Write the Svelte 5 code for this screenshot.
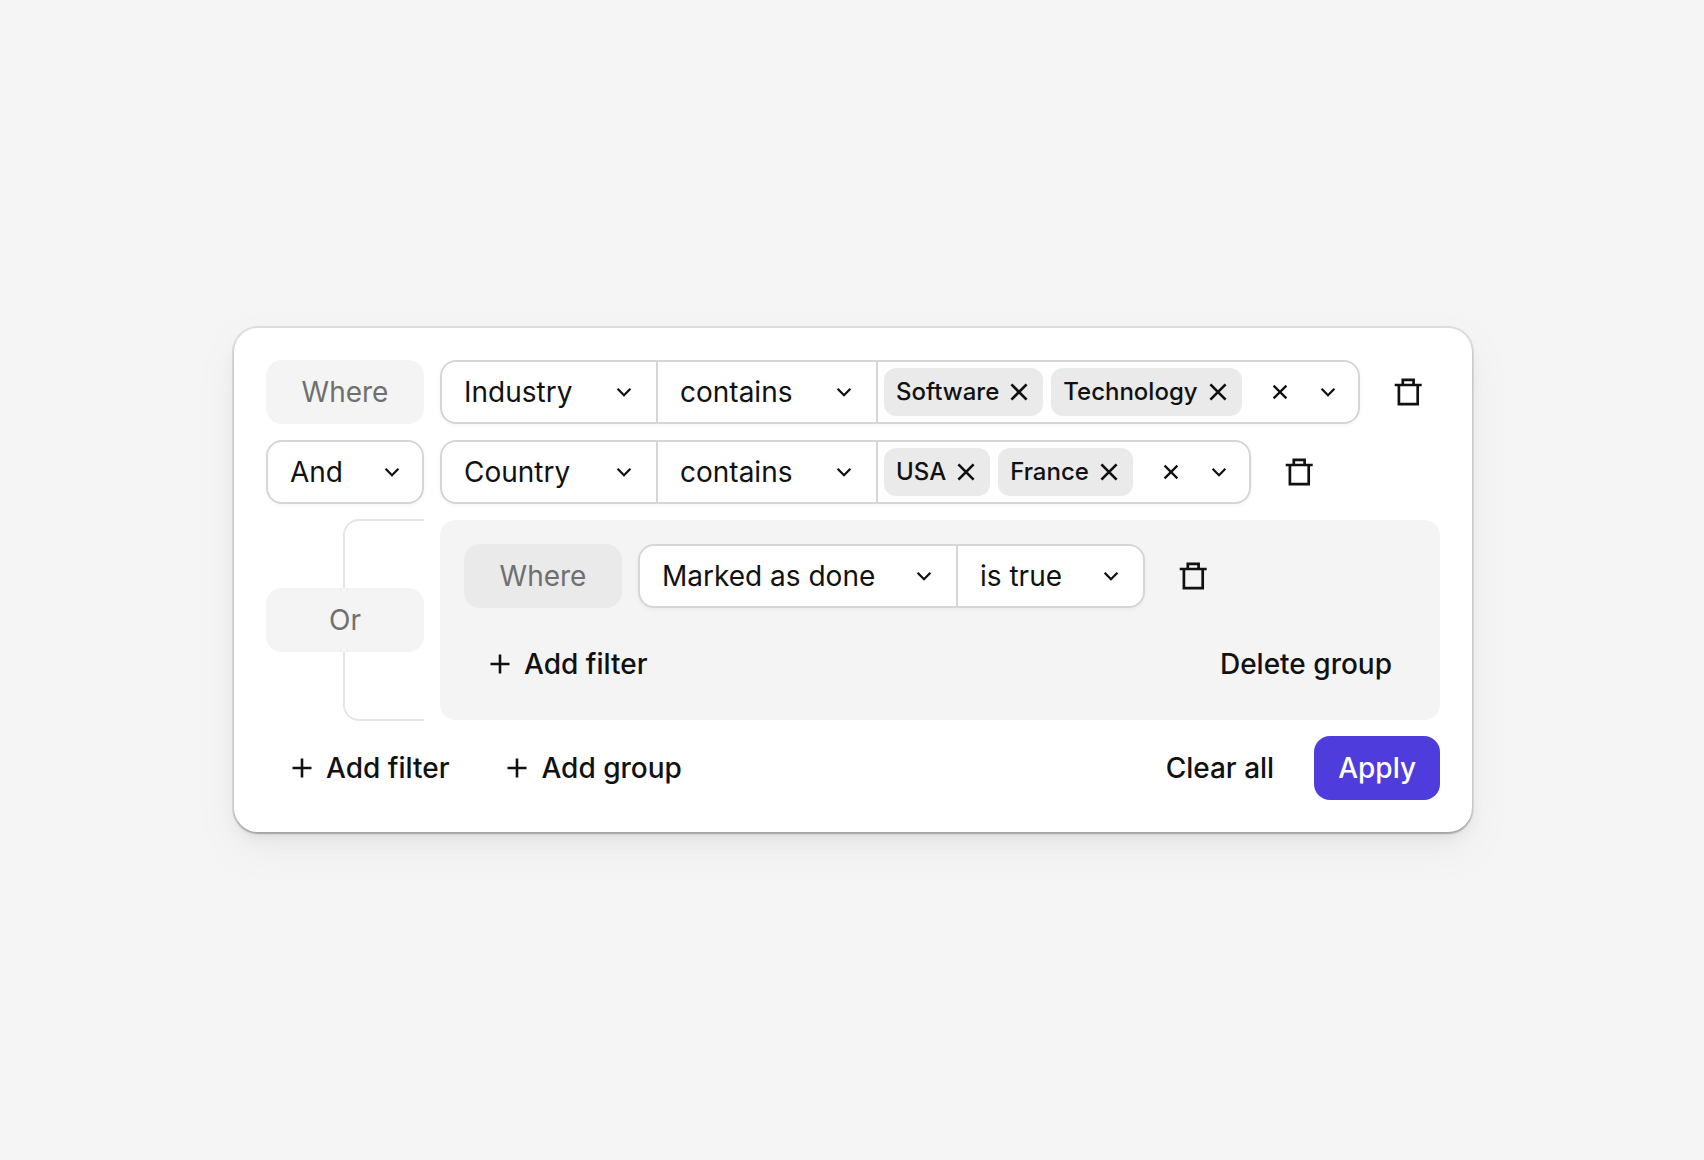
<script>
    let filters = $state([
        { id: 1, field: 'Industry', operator: 'contains', values: ['Software', 'Technology'] },
        { id: 2, field: 'Country', operator: 'contains', values: ['USA', 'France'] },
    ])
    let groupFilters = $state([{ id: 3, field: 'Marked as done', operator: 'is true' }])
    let connective = $state('And')
    let hasGroup = $state(true)
    let nextId = 4

    const fields = ['Industry', 'Country']
    const operators = ['contains', 'is', 'is not']

    function addFilter() {
        filters.push({ id: nextId++, field: 'Industry', operator: 'contains', values: [] })
    }

    function addGroupFilter() {
        groupFilters.push({ id: nextId++, field: 'Marked as done', operator: 'is true' })
    }

    function clearAll() {
        filters = []
        groupFilters = []
        hasGroup = false
    }
</script>

{#snippet chevron()}
    <svg class="chevron" viewBox="0 0 24 24" aria-hidden="true">
        <path d="M5.6 8.8 12 15.2l6.4-6.4" />
    </svg>
{/snippet}

{#snippet plus()}
    <svg class="plus" viewBox="0 0 24 24" aria-hidden="true">
        <path d="M12 2.5v19M2.5 12h19" />
    </svg>
{/snippet}

{#snippet trash()}
    <svg class="trash" viewBox="0 0 32 32" aria-hidden="true">
        <path d="M2.7 9h27M6.9 9v19.2h18.8V9M10.8 9V3.8h10.8V9" />
    </svg>
{/snippet}

<main>
    <form class="card" onsubmit={(e) => e.preventDefault()}>
        {#each filters as filter, i (filter.id)}
            <div class="row">
                {#if i === 0}
                    <div class="tag">Where</div>
                {:else}
                    <div class="control connective">
                        <label class="select">
                            <select aria-label="Connective" bind:value={connective}>
                                <option>And</option>
                                <option>Or</option>
                            </select>
                            {@render chevron()}
                        </label>
                    </div>
                {/if}
                <div class="control">
                    <label class="select field">
                        <select aria-label="Field" bind:value={filter.field}>
                            {#each fields as field}
                                <option>{field}</option>
                            {/each}
                        </select>
                        {@render chevron()}
                    </label>
                    <label class="select operator">
                        <select aria-label="Operator" bind:value={filter.operator}>
                            {#each operators as operator}
                                <option>{operator}</option>
                            {/each}
                        </select>
                        {@render chevron()}
                    </label>
                    <div class="values">
                        {#each filter.values as value, v}
                            <span class="chip">
                                {value}
                                <button type="button" aria-label="Remove {value}" onclick={() => filter.values.splice(v, 1)}>
                                    <svg viewBox="0 0 24 24" aria-hidden="true"><path d="M4.4 4.4l15.2 15.2M19.6 4.4L4.4 19.6" /></svg>
                                </button>
                            </span>
                        {/each}
                        <div class="value-actions">
                            <button type="button" aria-label="Clear values" onclick={() => (filter.values = [])}>
                                <svg viewBox="0 0 24 24" aria-hidden="true"><path d="M5.6 5.6l12.8 12.8M18.4 5.6L5.6 18.4" /></svg>
                            </button>
                            <button type="button" aria-label="Open values">
                                {@render chevron()}
                            </button>
                        </div>
                    </div>
                </div>
                <button type="button" class="delete" aria-label="Delete filter" onclick={() => filters.splice(i, 1)}>
                    {@render trash()}
                </button>
            </div>
        {/each}

        {#if hasGroup}
            <div class="row group-row">
                <div class="bracket">
                    <div class="tag">Or</div>
                </div>
                <div class="group">
                    {#each groupFilters as filter, i (filter.id)}
                        <div class="row">
                            <div class="tag dark">{i === 0 ? 'Where' : 'And'}</div>
                            <div class="control">
                                <label class="select">
                                    <select aria-label="Field" bind:value={filter.field}>
                                        <option>Marked as done</option>
                                    </select>
                                    {@render chevron()}
                                </label>
                                <label class="select">
                                    <select aria-label="Operator" bind:value={filter.operator}>
                                        <option>is true</option>
                                    </select>
                                    {@render chevron()}
                                </label>
                            </div>
                            <button type="button" class="delete" aria-label="Delete filter" onclick={() => groupFilters.splice(i, 1)}>
                                {@render trash()}
                            </button>
                        </div>
                    {/each}
                    <div class="actions">
                        <button type="button" class="button" onclick={addGroupFilter}>{@render plus()}Add filter</button>
                        <button type="button" class="button" onclick={() => (hasGroup = false)}>Delete group</button>
                    </div>
                </div>
            </div>
        {/if}

        <div class="actions">
            <div class="add">
                <button type="button" class="button" onclick={addFilter}>{@render plus()}Add filter</button>
                <button type="button" class="button" onclick={() => (hasGroup = true)}>{@render plus()}Add group</button>
            </div>
            <div class="finish">
                <button type="button" class="button" onclick={clearAll}>Clear all</button>
                <button type="submit" class="button primary">Apply</button>
            </div>
        </div>
    </form>
</main>

<style>
    :global(body) {
        margin: 0;
        background: #f5f5f5;
    }

    main {
        display: flex;
        align-items: center;
        justify-content: center;
        min-height: 100vh;
        box-sizing: border-box;
        padding: 32px 32px 32px 34px;
        font-family: Inter, sans-serif;
        font-size: 28px;
        line-height: 40px;
        color: #111111;
    }

    .card {
        flex: 1;
        display: flex;
        flex-direction: column;
        gap: 16px;
        max-width: 1174px;
        padding: 32px;
        border-radius: 24px;
        background: #ffffff;
        box-shadow:
            0 0 0 2px rgba(0, 0, 0, .09),
            0 2px 2px 0 rgba(0, 0, 0, .2),
            0 8px 16px -4px rgba(0, 0, 0, .08),
            0 16px 48px 0 rgba(0, 0, 0, .05);
    }

    .row {
        display: flex;
        gap: 16px;
    }

    button,
    select {
        appearance: none;
        margin: 0;
        padding: 0;
        border: 0;
        background: none;
        font: inherit;
        color: inherit;
        cursor: pointer;
    }

    svg {
        display: block;
        width: 24px;
        height: 24px;
        fill: none;
        stroke: currentColor;
        stroke-width: 2.3;
    }

    svg.trash {
        width: 32px;
        height: 32px;
        stroke-width: 2.7;
    }

    svg.plus {
        stroke-width: 2.6;
    }

    .tag,
    .connective {
        flex: none;
        box-sizing: border-box;
        width: 158px;
        height: 64px;
    }

    .tag {
        display: flex;
        align-items: center;
        justify-content: center;
        border-radius: 16px;
        background: #f4f4f4;
        color: #6f6f6f;
    }

    .tag.dark {
        background: #eaeaea;
    }

    .control {
        display: flex;
        border: 2px solid #d6d6d6;
        border-radius: 16px;
        background: #ffffff;
        box-shadow: 0 2px 4px rgba(0, 0, 0, .04);
    }

    /* the chevron shares the select's cell */
    .select {
        display: grid;
        align-items: center;
        box-sizing: border-box;
    }

    .field {
        min-width: 214px;
    }

    .operator {
        min-width: 220px;
    }

    .connective .select {
        flex: 1;
    }

    .select + .select,
    .values {
        border-left: 2px solid #d6d6d6;
    }

    .select select {
        grid-area: 1 / 1;
        height: 60px;
        padding: 0 80px 0 22px;
        border-radius: 14px;
    }

    .connective select {
        padding-right: 0;
    }

    .select .chevron {
        grid-area: 1 / 1;
        justify-self: end;
        margin-right: 20px;
        pointer-events: none;
    }

    .connective .chevron {
        margin-right: 18px;
    }

    .values {
        display: flex;
        align-items: center;
        gap: 8px;
        padding-left: 6px;
    }

    .chip {
        display: flex;
        align-items: center;
        gap: 8px;
        height: 48px;
        padding: 0 12px;
        border-radius: 12px;
        background: #eaeaea;
        font-size: 24px;
        font-weight: 500;
    }

    .chip svg {
        stroke-width: 2.7;
    }

    .value-actions {
        display: flex;
        gap: 24px;
        padding: 0 18px;
    }

    .delete {
        display: flex;
        align-items: center;
        justify-content: center;
        width: 64px;
        height: 64px;
    }

    .group-row {
        align-items: stretch;
    }

    .bracket {
        position: relative;
        display: flex;
        align-items: center;
    }

    .bracket::before {
        content: '';
        position: absolute;
        top: -1px;
        right: 0;
        bottom: -1px;
        width: 79px;
        border: 2px solid #e5e5e5;
        border-right: 0;
        border-radius: 16px 0 0 16px;
    }

    .bracket .tag {
        position: relative;
    }

    .group {
        flex: 1;
        display: flex;
        flex-direction: column;
        gap: 24px;
        padding: 24px;
        border-radius: 16px;
        background: #f4f4f4;
    }

    .actions {
        display: flex;
        justify-content: space-between;
    }

    .add,
    .finish {
        display: flex;
        gap: 8px;
    }

    .finish {
        gap: 16px;
    }

    .button {
        display: flex;
        align-items: center;
        gap: 12px;
        height: 64px;
        padding: 0 24px;
        border-radius: 16px;
        font-weight: 500;
    }

    .primary {
        background: #4f3cdd;
        color: #ffffff;
    }
</style>
